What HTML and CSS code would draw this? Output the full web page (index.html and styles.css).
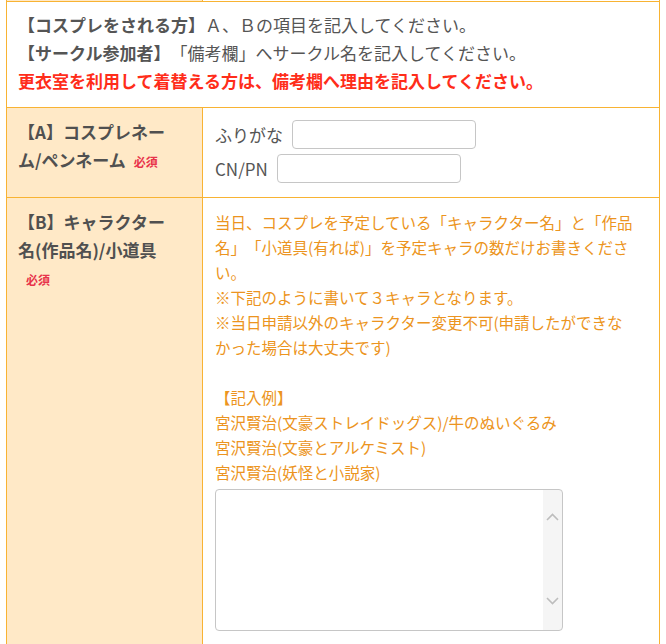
FILE: index.html
```html
<!DOCTYPE html>
<html>
<head>
    <meta charset="utf-8">
    <title>参加申込</title>
    <link rel="stylesheet" href="styles.css">
</head>
<body>
    <div class="page">
        <table class="entry">
            <tr class="prev">
                <th></th>
                <td></td>
            </tr>
            <tr>
                <td colspan="2" class="notice">
                    <p><b>【コスプレをされる方】</b>Ａ、Ｂの項目を記入してください。</p>
                    <p><b>【サークル参加者】</b>「備考欄」へサークル名を記入してください。</p>
                    <p class="warn">更衣室を利用して着替える方は、備考欄へ理由を記入してください。</p>
                </td>
            </tr>
            <tr>
                <th>【A】コスプレネーム/ペンネーム<span class="req">必須</span></th>
                <td class="field">
                    <div class="line">
                        <label for="kana">ふりがな</label>
                        <input type="text" id="kana" class="text_input">
                    </div>
                    <div class="line">
                        <label for="cnpn">CN/PN</label>
                        <input type="text" id="cnpn" class="text_input">
                    </div>
                </td>
            </tr>
            <tr>
                <th>【B】キャラクター名(作品名)/小道具<span class="req">必須</span></th>
                <td class="field guide">
                    <p>当日、コスプレを予定している「キャラクター名」と「作品名」「小道具(有れば)」を予定キャラの数だけお書きください。</p>
                    <p>※下記のように書いて３キャラとなります。</p>
                    <p>※当日申請以外のキャラクター変更不可(申請したができなかった場合は大丈夫です)</p>
                    <p class="example">【記入例】</p>
                    <p>宮沢賢治(文豪ストレイドッグス)/牛のぬいぐるみ</p>
                    <p>宮沢賢治(文豪とアルケミスト)</p>
                    <p>宮沢賢治(妖怪と小説家)</p>
                    <textarea class="chara_area"></textarea>
                </td>
            </tr>
        </table>
    </div>
</body>
</html>
```

FILE: styles.css
```css
body {
    margin: 0;
    font-family: "Noto Sans CJK JP", sans-serif;
    color: #555;
    text-spacing-trim: space-all;
}
p {
    margin: 0;
}
.page {
    padding-left: 6px;
}
.entry {
    border-collapse: collapse;
    width: 654px;
}
.entry th,
.entry td {
    border: 1px solid #f8b333;
}
.entry th {
    width: 160px;
    padding: 10px 24px 10px 11px;
    background-color: #ffe9c7;
    text-align: left;
    vertical-align: top;
    font-size: 17px;
    line-height: 28px;
    font-weight: bold;
    color: #505050;
}
.prev th,
.prev td {
    height: 1px;
    padding: 0;
    border-top: none;
    line-height: 0;
}
.notice {
    padding: 9px 12px 12px 11px;
    font-size: 17px;
    line-height: 28px;
}
.warn {
    color: #ff2d1a;
    font-weight: bold;
}
.req {
    display: inline-block;
    margin-left: 8px;
    font-size: 12px;
    line-height: 28px;
    color: #e8334a;
    white-space: nowrap;
}
.field {
    padding: 12px 22px 14px 12px;
    vertical-align: top;
}
.line {
    display: flex;
    align-items: center;
    gap: 9px;
    font-size: 17px;
}
.line + .line {
    margin-top: 5px;
}
.text_input {
    box-sizing: border-box;
    width: 184px;
    height: 29px;
    border: 1px solid #c6c6c6;
    border-radius: 4px;
    background: #fff;
}
.guide {
    font-size: 15.5px;
    line-height: 25px;
    color: #ec9420;
}
.example {
    margin-top: 25px;
}
/* scroll track drawn as backgrounds (window scrollbars are hidden) */
.chara_area {
    display: block;
    box-sizing: border-box;
    width: 348px;
    height: 142px;
    margin-top: 4px;
    padding-right: 22px;
    border: 1px solid #c6c6c6;
    border-radius: 4px;
    resize: none;
    background:
        url("data:image/svg+xml,%3Csvg xmlns='http://www.w3.org/2000/svg' width='13' height='8'%3E%3Cpath d='M1 7l5.5-5.5L12 7' fill='none' stroke='%23bdbdbd' stroke-width='1.6'/%3E%3C/svg%3E") no-repeat right 3px top 23px,
        url("data:image/svg+xml,%3Csvg xmlns='http://www.w3.org/2000/svg' width='13' height='8'%3E%3Cpath d='M1 1l5.5 5.5L12 1' fill='none' stroke='%23bdbdbd' stroke-width='1.6'/%3E%3C/svg%3E") no-repeat right 3px bottom 25px,
        linear-gradient(#f5f5f5, #f5f5f5) no-repeat right top / 19px 100%,
        #fff;
}
```
